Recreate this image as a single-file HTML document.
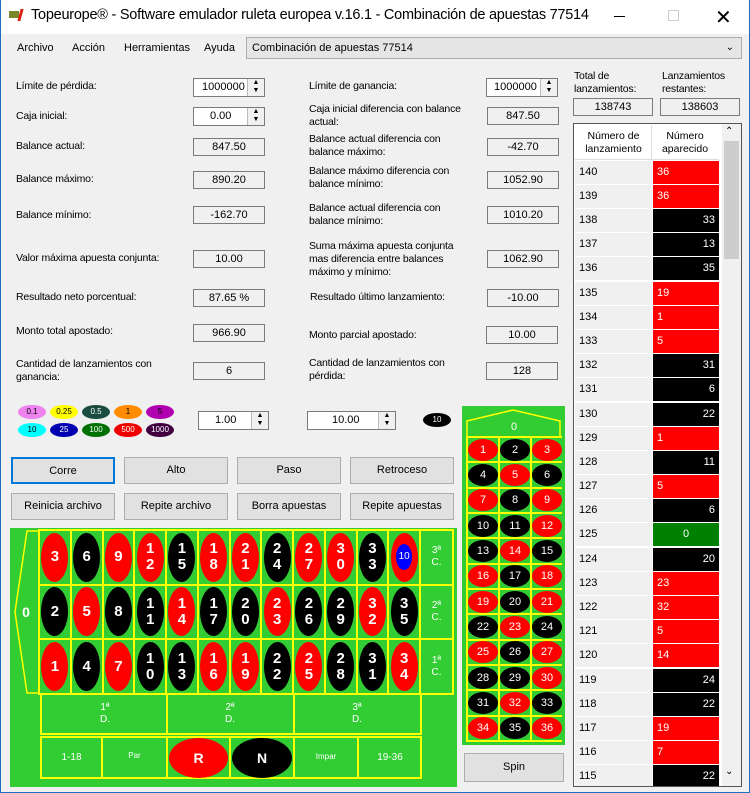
<!DOCTYPE html>
<html><head><meta charset="utf-8"><style>
*{box-sizing:border-box;margin:0;padding:0}
body{width:750px;height:793px;background:#f0f0f0;font-family:"Liberation Sans",sans-serif;font-size:11px;color:#000;position:relative;overflow:hidden}
.a{position:absolute}
.title{left:0;top:0;width:750px;height:34px;background:#fff;border-left:1px solid #1e6fbd}
.lbl{position:absolute;font-size:10.5px;line-height:13px;letter-spacing:-0.2px}
.box{position:absolute;width:72px;height:18px;border:1px solid #7a7a7a;background:#f0f0f0;text-align:center;font-size:11px;line-height:16px}
.sp{position:absolute;height:19px;border:1px solid #7a7a7a;background:#fff;font-size:11px;line-height:17px}
.sp .ar{position:absolute;right:0;top:0;width:17px;height:17px;border-left:1px solid #bbb;background:#f0f0f0;font-size:7px;line-height:8px;text-align:center}
.btn{position:absolute;height:27px;width:104px;border:1px solid #adadad;background:#e1e1e1;text-align:center;line-height:25px;font-size:11px}
.chip{position:absolute;width:28px;height:14px;border-radius:50%;font-size:8px;line-height:14px;text-align:center}
.board{left:10px;top:528px;width:447px;height:259px;background:#32cd32}
.grid{position:absolute;left:38px;top:529px;width:416px;height:166px;background:#ffff00;display:grid;grid-template-columns:repeat(12,1fr) 31px;grid-template-rows:repeat(3,1fr);gap:2px;padding:2px}
.c{background:#32cd32;display:flex;align-items:center;justify-content:center}
.e{width:27px;height:49px;border-radius:50%;color:#fff;font-weight:bold;font-size:15px;line-height:16px;text-align:center;display:flex;align-items:center;justify-content:center}
.r{background:#f00}.b{background:#000}
.cl{color:#fff;font-size:10px;line-height:12px;text-align:center}
.mini{position:absolute;left:466px;top:436px;width:96px;height:306px;background:#ff0;display:grid;grid-template-columns:repeat(3,1fr);grid-template-rows:repeat(12,1fr);gap:2px;padding:2px}
.m{width:30px;height:22px;border-radius:50%;color:#fff;font-size:11px;line-height:22px;text-align:center}
.list{left:573px;top:123px;width:169px;height:664px;border:1px solid #555;background:#fff;overflow:hidden}
.row{position:absolute;left:1px;width:144px;height:24px;border-bottom:1px solid #fff}
.row .n{position:absolute;left:0;top:0;width:77px;height:23px;background:#f0f0f0;padding-left:4px;line-height:23px}
.row .v{position:absolute;left:78px;top:0;width:66px;height:23px;line-height:23px;color:#fff;padding:0 4px}
.vr{background:#f00;text-align:left}.vb{background:#000;text-align:right}.vg{background:#008000;text-align:center}
.yl{position:absolute;background:#ff0}
</style></head><body>
<div class="a title"></div>
<div class="a" style="left:9px;top:11px;width:10px;height:7px;background:#7a8a2a"></div>
<div class="a" style="left:19px;top:9px;width:3px;height:12px;background:#d21;transform:skewX(-15deg)"></div>
<div class="a" style="left:31px;top:7px;font-size:14.5px;letter-spacing:-0.25px">Topeurope® - Software emulador ruleta europea v.16.1 - Combinación de apuestas 77514</div>
<div class="a" style="left:614px;top:16px;width:11px;height:1px;background:#000"></div>
<div class="a" style="left:668px;top:10px;width:11px;height:11px;border:1px solid #ccc"></div>
<div class="a" style="left:715px;top:5px;font-size:20px;font-weight:300">✕</div>

<div class="a" style="left:17px;top:42px;font-size:11px">Archivo</div>
<div class="a" style="left:72px;top:42px;font-size:11px">Acción</div>
<div class="a" style="left:124px;top:42px;font-size:11px">Herramientas</div>
<div class="a" style="left:204px;top:42px;font-size:11px">Ayuda</div>
<div class="a" style="left:246px;top:37px;width:496px;height:22px;border:1px solid #adadad;background:#e5e5e5;padding-left:5px;line-height:20px;font-size:11px">Combinación de apuestas 77514<span style="position:absolute;right:7px;top:0;font-size:10px">⌄</span></div>

<div class="lbl" style="left:16px;top:80px">Límite de pérdida:</div>
<div class="sp" style="left:193px;top:78px;width:72px;padding-left:8px">1000000<div class="ar">▲<br>▼</div></div>
<div class="lbl" style="left:16px;top:110px">Caja inicial:</div>
<div class="sp" style="left:193px;top:107px;width:72px;padding-left:16px">0.00<div class="ar">▲<br>▼</div></div>
<div class="lbl" style="left:16px;top:140px">Balance actual:</div><div class="box" style="left:193px;top:138px">847.50</div>
<div class="lbl" style="left:16px;top:173px">Balance máximo:</div><div class="box" style="left:193px;top:171px">890.20</div>
<div class="lbl" style="left:16px;top:209px">Balance mínimo:</div><div class="box" style="left:193px;top:206px">-162.70</div>
<div class="lbl" style="left:16px;top:252px">Valor máxima apuesta conjunta:</div><div class="box" style="left:193px;top:250px">10.00</div>
<div class="lbl" style="left:16px;top:291px">Resultado neto porcentual:</div><div class="box" style="left:193px;top:289px">87.65 %</div>
<div class="lbl" style="left:16px;top:325px">Monto total apostado:</div><div class="box" style="left:193px;top:324px">966.90</div>
<div class="lbl" style="left:16px;top:358px">Cantidad de lanzamientos con<br>ganancia:</div><div class="box" style="left:193px;top:362px">6</div>

<div class="lbl" style="left:309px;top:80px">Límite de ganancia:</div>
<div class="sp" style="left:486px;top:78px;width:72px;padding-left:7px">1000000<div class="ar">▲<br>▼</div></div>
<div class="lbl" style="left:309px;top:103px">Caja inicial diferencia con balance<br>actual:</div><div class="box" style="left:487px;top:107px">847.50</div>
<div class="lbl" style="left:309px;top:133px">Balance actual diferencia con<br>balance máximo:</div><div class="box" style="left:487px;top:138px">-42.70</div>
<div class="lbl" style="left:309px;top:165px">Balance máximo diferencia con<br>balance mínimo:</div><div class="box" style="left:487px;top:171px">1052.90</div>
<div class="lbl" style="left:309px;top:202px">Balance actual diferencia con<br>balance mínimo:</div><div class="box" style="left:487px;top:206px">1010.20</div>
<div class="lbl" style="left:309px;top:240px">Suma máxima apuesta conjunta<br>mas diferencia entre balances<br>máximo y mínimo:</div><div class="box" style="left:487px;top:250px">1062.90</div>
<div class="lbl" style="left:310px;top:291px">Resultado último lanzamiento:</div><div class="box" style="left:487px;top:289px">-10.00</div>
<div class="lbl" style="left:309px;top:329px">Monto parcial apostado:</div><div class="box" style="left:486px;top:326px">10.00</div>
<div class="lbl" style="left:309px;top:357px">Cantidad de lanzamientos con<br>pérdida:</div><div class="box" style="left:486px;top:362px">128</div>

<div class="chip" style="left:18px;top:405px;background:#ee82ee">0.1</div>
<div class="chip" style="left:50px;top:405px;background:#ff0">0.25</div>
<div class="chip" style="left:82px;top:405px;background:#1a4d40;color:#fff">0.5</div>
<div class="chip" style="left:114px;top:405px;background:#ff8c00">1</div>
<div class="chip" style="left:146px;top:405px;background:#b000b0">5</div>
<div class="chip" style="left:18px;top:423px;background:#0ff">10</div>
<div class="chip" style="left:50px;top:423px;background:#0000b0;color:#fff">25</div>
<div class="chip" style="left:82px;top:423px;background:#007000;color:#fff">100</div>
<div class="chip" style="left:114px;top:423px;background:#e00;color:#fff">500</div>
<div class="chip" style="left:146px;top:423px;background:#400040;color:#fff">1000</div>
<div class="sp" style="left:198px;top:411px;width:71px;padding-left:16px">1.00<div class="ar">▲<br>▼</div></div>
<div class="sp" style="left:307px;top:411px;width:89px;padding-left:24px">10.00<div class="ar">▲<br>▼</div></div>
<div class="chip" style="left:423px;top:413px;background:#000;color:#fff">10</div>

<div class="btn" style="left:11px;top:457px;border:2px solid #0078d7">Corre</div>
<div class="btn" style="left:124px;top:457px">Alto</div>
<div class="btn" style="left:237px;top:457px">Paso</div>
<div class="btn" style="left:350px;top:457px">Retroceso</div>
<div class="btn" style="left:11px;top:493px">Reinicia archivo</div>
<div class="btn" style="left:124px;top:493px">Repite archivo</div>
<div class="btn" style="left:237px;top:493px">Borra apuestas</div>
<div class="btn" style="left:350px;top:493px">Repite apuestas</div>

<div class="a board"></div>
<svg class="a" style="left:11px;top:529px" width="30" height="166"><polygon points="16,2 28,2 28,164 16,164 4,83" fill="#32cd32" stroke="#ff0" stroke-width="1.5"/><text x="15" y="88" fill="#fff" font-family="Liberation Sans" font-weight="bold" font-size="14" text-anchor="middle">0</text></svg>
<div class="grid">
<div class="c"><div class="e r">3</div></div><div class="c"><div class="e b">6</div></div><div class="c"><div class="e r">9</div></div><div class="c"><div class="e r">1<br>2</div></div><div class="c"><div class="e b">1<br>5</div></div><div class="c"><div class="e r">1<br>8</div></div><div class="c"><div class="e r">2<br>1</div></div><div class="c"><div class="e b">2<br>4</div></div><div class="c"><div class="e r">2<br>7</div></div><div class="c"><div class="e r">3<br>0</div></div><div class="c"><div class="e b">3<br>3</div></div><div class="c"><div class="e r"><div style="width:16px;height:26px;border-radius:50%;background:#00f;font-size:10px;font-weight:normal;line-height:26px">10</div></div></div><div class="c cl">3ª<br>C.</div>
<div class="c"><div class="e b">2</div></div><div class="c"><div class="e r">5</div></div><div class="c"><div class="e b">8</div></div><div class="c"><div class="e b">1<br>1</div></div><div class="c"><div class="e r">1<br>4</div></div><div class="c"><div class="e b">1<br>7</div></div><div class="c"><div class="e b">2<br>0</div></div><div class="c"><div class="e r">2<br>3</div></div><div class="c"><div class="e b">2<br>6</div></div><div class="c"><div class="e b">2<br>9</div></div><div class="c"><div class="e r">3<br>2</div></div><div class="c"><div class="e b">3<br>5</div></div><div class="c cl">2ª<br>C.</div>
<div class="c"><div class="e r">1</div></div><div class="c"><div class="e b">4</div></div><div class="c"><div class="e r">7</div></div><div class="c"><div class="e b">1<br>0</div></div><div class="c"><div class="e b">1<br>3</div></div><div class="c"><div class="e r">1<br>6</div></div><div class="c"><div class="e r">1<br>9</div></div><div class="c"><div class="e b">2<br>2</div></div><div class="c"><div class="e r">2<br>5</div></div><div class="c"><div class="e b">2<br>8</div></div><div class="c"><div class="e b">3<br>1</div></div><div class="c"><div class="e r">3<br>4</div></div><div class="c cl">1ª<br>C.</div>
</div>
<div class="yl" style="left:40px;top:693px;width:382px;height:2px"></div>
<div class="yl" style="left:40px;top:693px;width:2px;height:86px"></div>
<div class="yl" style="left:420px;top:693px;width:2px;height:42px"></div>
<div class="yl" style="left:166px;top:693px;width:2px;height:86px"></div>
<div class="yl" style="left:293px;top:693px;width:2px;height:86px"></div>
<div class="yl" style="left:40px;top:733px;width:382px;height:2px"></div>
<div class="yl" style="left:40px;top:735px;width:382px;height:2px;background:#32cd32"></div>
<div class="yl" style="left:40px;top:736px;width:382px;height:2px"></div>
<div class="yl" style="left:40px;top:777px;width:382px;height:2px"></div>
<div class="yl" style="left:420px;top:736px;width:2px;height:43px"></div>
<div class="yl" style="left:101px;top:736px;width:2px;height:43px"></div>
<div class="yl" style="left:229px;top:736px;width:2px;height:43px"></div>
<div class="yl" style="left:357px;top:736px;width:2px;height:43px"></div>
<div class="a cl" style="left:90px;top:702px;width:30px">1ª<br>D.</div>
<div class="a cl" style="left:215px;top:702px;width:30px">2ª<br>D.</div>
<div class="a cl" style="left:342px;top:702px;width:30px">3ª<br>D.</div>
<div class="a cl" style="left:42px;top:752px;width:59px">1-18</div>
<div class="a cl" style="left:103px;top:750px;width:63px;font-size:8px">Par</div>
<div class="a" style="left:169px;top:738px;width:59px;height:40px;border-radius:50%;background:#f00;color:#fff;font-weight:bold;font-size:14px;line-height:40px;text-align:center">R</div>
<div class="a" style="left:232px;top:738px;width:60px;height:40px;border-radius:50%;background:#000;color:#fff;font-weight:bold;font-size:14px;line-height:40px;text-align:center">N</div>
<div class="a cl" style="left:295px;top:751px;width:62px;font-size:8px">Impar</div>
<div class="a cl" style="left:359px;top:752px;width:62px">19-36</div>

<div class="a" style="left:462px;top:406px;width:103px;height:339px;background:#32cd32"></div>
<svg class="a" style="left:463px;top:408px" width="101" height="30"><polyline points="4,28 4,13 50,2 97,13 97,28" fill="none" stroke="#ff0" stroke-width="1.5"/><text x="51" y="22" fill="#fff" font-family="Liberation Sans" font-size="11" text-anchor="middle">0</text></svg>
<div class="mini">
<div class="c"><div class="m r">1</div></div><div class="c"><div class="m b">2</div></div><div class="c"><div class="m r">3</div></div>
<div class="c"><div class="m b">4</div></div><div class="c"><div class="m r">5</div></div><div class="c"><div class="m b">6</div></div>
<div class="c"><div class="m r">7</div></div><div class="c"><div class="m b">8</div></div><div class="c"><div class="m r">9</div></div>
<div class="c"><div class="m b">10</div></div><div class="c"><div class="m b">11</div></div><div class="c"><div class="m r">12</div></div>
<div class="c"><div class="m b">13</div></div><div class="c"><div class="m r">14</div></div><div class="c"><div class="m b">15</div></div>
<div class="c"><div class="m r">16</div></div><div class="c"><div class="m b">17</div></div><div class="c"><div class="m r">18</div></div>
<div class="c"><div class="m r">19</div></div><div class="c"><div class="m b">20</div></div><div class="c"><div class="m r">21</div></div>
<div class="c"><div class="m b">22</div></div><div class="c"><div class="m r">23</div></div><div class="c"><div class="m b">24</div></div>
<div class="c"><div class="m r">25</div></div><div class="c"><div class="m b">26</div></div><div class="c"><div class="m r">27</div></div>
<div class="c"><div class="m b">28</div></div><div class="c"><div class="m b">29</div></div><div class="c"><div class="m r">30</div></div>
<div class="c"><div class="m b">31</div></div><div class="c"><div class="m r">32</div></div><div class="c"><div class="m b">33</div></div>
<div class="c"><div class="m r">34</div></div><div class="c"><div class="m b">35</div></div><div class="c"><div class="m r">36</div></div>
</div>
<div class="btn" style="left:464px;top:753px;width:100px;height:29px;line-height:27px">Spin</div>

<div class="lbl" style="left:574px;top:70px">Total de<br>lanzamientos:</div>
<div class="lbl" style="left:662px;top:70px">Lanzamientos<br>restantes:</div>
<div class="box" style="left:573px;top:98px;width:80px">138743</div>
<div class="box" style="left:660px;top:98px;width:80px">138603</div>
<div class="a list">
<div class="a" style="left:1px;top:1px;width:144px;height:35px;background:#fff;border-bottom:1px solid #ddd"></div>
<div class="a" style="left:77px;top:1px;width:1px;height:35px;background:#ddd"></div>
<div class="a" style="left:1px;top:6px;width:77px;text-align:center;font-size:10.5px;line-height:13px">Número de<br>lanzamiento</div>
<div class="a" style="left:78px;top:6px;width:66px;text-align:center;font-size:10.5px;line-height:13px">Número<br>aparecido</div>
<div class="a" style="left:148px;top:0;width:19px;height:662px;background:#f0f0f0"></div>
<div class="a" style="left:150px;top:17px;width:15px;height:118px;background:#cdcdcd"></div>
<div class="a" style="left:151px;top:2px;font-size:10px">⌃</div>
<div class="a" style="left:151px;top:642px;font-size:10px">⌄</div>
<div class="row" style="top:37px"><div class="n">140</div><div class="v vr">36</div></div>
<div class="row" style="top:61px"><div class="n">139</div><div class="v vr">36</div></div>
<div class="row" style="top:85px"><div class="n">138</div><div class="v vb">33</div></div>
<div class="row" style="top:109px"><div class="n">137</div><div class="v vb">13</div></div>
<div class="row" style="top:133px"><div class="n">136</div><div class="v vb">35</div></div>
<div class="row" style="top:158px"><div class="n">135</div><div class="v vr">19</div></div>
<div class="row" style="top:182px"><div class="n">134</div><div class="v vr">1</div></div>
<div class="row" style="top:206px"><div class="n">133</div><div class="v vr">5</div></div>
<div class="row" style="top:230px"><div class="n">132</div><div class="v vb">31</div></div>
<div class="row" style="top:254px"><div class="n">131</div><div class="v vb">6</div></div>
<div class="row" style="top:279px"><div class="n">130</div><div class="v vb">22</div></div>
<div class="row" style="top:303px"><div class="n">129</div><div class="v vr">1</div></div>
<div class="row" style="top:327px"><div class="n">128</div><div class="v vb">11</div></div>
<div class="row" style="top:351px"><div class="n">127</div><div class="v vr">5</div></div>
<div class="row" style="top:375px"><div class="n">126</div><div class="v vb">6</div></div>
<div class="row" style="top:399px"><div class="n">125</div><div class="v vg">0</div></div>
<div class="row" style="top:424px"><div class="n">124</div><div class="v vb">20</div></div>
<div class="row" style="top:448px"><div class="n">123</div><div class="v vr">23</div></div>
<div class="row" style="top:472px"><div class="n">122</div><div class="v vr">32</div></div>
<div class="row" style="top:496px"><div class="n">121</div><div class="v vr">5</div></div>
<div class="row" style="top:520px"><div class="n">120</div><div class="v vr">14</div></div>
<div class="row" style="top:545px"><div class="n">119</div><div class="v vb">24</div></div>
<div class="row" style="top:569px"><div class="n">118</div><div class="v vb">22</div></div>
<div class="row" style="top:593px"><div class="n">117</div><div class="v vr">19</div></div>
<div class="row" style="top:617px"><div class="n">116</div><div class="v vr">7</div></div>
<div class="row" style="top:641px"><div class="n">115</div><div class="v vb">22</div></div>
</div>
<div class="a" style="left:0;top:34px;width:1px;height:759px;background:#1e6fbd"></div>
<div class="a" style="left:749px;top:0;width:1px;height:793px;background:#1e6fbd"></div>
<div class="a" style="left:0;top:792px;width:750px;height:1px;background:#1e6fbd"></div>
</body></html>
